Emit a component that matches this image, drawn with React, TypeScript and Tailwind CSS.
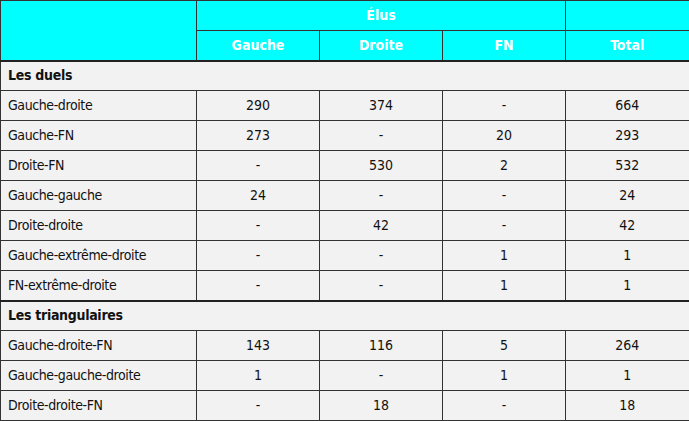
const font = { fontFamily: '"Liberation Sans Narrow", "DejaVu Sans Condensed", "DejaVu Sans", sans-serif' }

type Row = [string, string, string, string, string]

const duels: Row[] = [
  ['Gauche-droite', '290', '374', '-', '664'],
  ['Gauche-FN', '273', '-', '20', '293'],
  ['Droite-FN', '-', '530', '2', '532'],
  ['Gauche-gauche', '24', '-', '-', '24'],
  ['Droite-droite', '-', '42', '-', '42'],
  ['Gauche-extrême-droite', '-', '-', '1', '1'],
  ['FN-extrême-droite', '-', '-', '1', '1'],
]

const triangulaires: Row[] = [
  ['Gauche-droite-FN', '143', '116', '5', '264'],
  ['Gauche-gauche-droite', '1', '-', '1', '1'],
  ['Droite-droite-FN', '-', '18', '-', '18'],
]

function DataRow({ row }: { row: Row }) {
  return (
    <tr className="h-[30px]">
      <td className="border border-[#333] pl-[7px] text-left tracking-[-0.4px]">{row[0]}</td>
      {row.slice(1).map((v, i) => (
        <td key={i} className="border border-[#333] text-center">{v}</td>
      ))}
    </tr>
  )
}

export default function App() {
  return (
    <div className="w-[689px] h-[421px] bg-white" style={font}>
      <table className="w-[689px] border-collapse table-fixed bg-[#f2f2f2] text-[14px] text-[#111] border-r-2 border-r-[#555] [font-stretch:condensed]">
        <colgroup>
          <col className="w-[196px]" />
          <col className="w-[123px]" />
          <col className="w-[123px]" />
          <col className="w-[123px]" />
          <col className="w-[124px]" />
        </colgroup>
        <thead>
          <tr className="h-[30px] bg-[#00ffff] text-white font-bold">
            <th rowSpan={2} className="border border-[#333] border-b-2 border-b-[#222]"></th>
            <th colSpan={3} className="border border-[#333] text-center">Élus</th>
            <th className="border border-[#333]"></th>
          </tr>
          <tr className="h-[30px] bg-[#00ffff] text-white font-bold">
            <th className="border border-[#333] border-b-2 border-b-[#222]">Gauche</th>
            <th className="border border-[#333] border-b-2 border-b-[#222]">Droite</th>
            <th className="border border-[#333] border-b-2 border-b-[#222]">FN</th>
            <th className="border border-[#333] border-b-2 border-b-[#222]">Total</th>
          </tr>
        </thead>
        <tbody>
          <tr className="h-[30px]">
            <td colSpan={5} className="border border-[#333] pl-[7px] font-bold tracking-[-0.3px]">Les duels</td>
          </tr>
          {duels.map((r) => (
            <DataRow key={r[0]} row={r} />
          ))}
          <tr className="h-[30px]">
            <td colSpan={5} className="border border-[#333] border-t-2 border-t-[#222] pl-[7px] font-bold tracking-[-0.3px]">Les triangulaires</td>
          </tr>
          {triangulaires.map((r) => (
            <DataRow key={r[0]} row={r} />
          ))}
        </tbody>
      </table>
    </div>
  )
}
